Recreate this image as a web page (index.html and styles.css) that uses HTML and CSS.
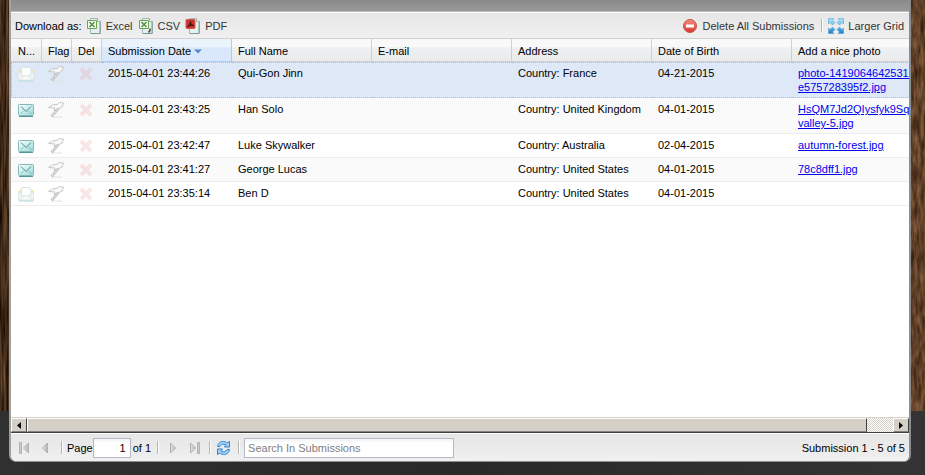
FILE: index.html
```html
<!DOCTYPE html>
<html lang="en">
<head>
    <meta charset="UTF-8">
    <meta name="viewport" content="width=device-width, initial-scale=1.0">
    <title>Submissions</title>
    <link rel="stylesheet" href="styles.css">
</head>
<body>

<!-- shared icons -->
<svg class="sprite" aria-hidden="true">
    <defs>
        <linearGradient id="mailFill" x1="0" y1="0" x2="1" y2="1">
            <stop offset="0" stop-color="#ffffff"/>
            <stop offset="1" stop-color="#9ad6d3"/>
        </linearGradient>
        <linearGradient id="redFill" x1="0" y1="0" x2="0" y2="1">
            <stop offset="0" stop-color="#f58a80"/>
            <stop offset="1" stop-color="#d8382e"/>
        </linearGradient>
        <linearGradient id="blueFill" x1="0" y1="0" x2="0" y2="16" gradientUnits="userSpaceOnUse">
            <stop offset="0" stop-color="#b4e2f6"/>
            <stop offset=".5" stop-color="#6cc0ea"/>
            <stop offset="1" stop-color="#1478be"/>
        </linearGradient>
        <linearGradient id="navFill" x1="0" y1="0" x2="1" y2="0">
            <stop offset="0" stop-color="#e6e6e6"/>
            <stop offset="1" stop-color="#b4b4b4"/>
        </linearGradient>
        <filter id="wood" x="0" y="0" width="100%" height="100%" color-interpolation-filters="sRGB">
            <feTurbulence type="fractalNoise" baseFrequency="0.45 0.02" numOctaves="3" seed="4"/>
            <feColorMatrix values="0.5 0 0 0 0.01  0.4 0 0 0 -0.03  0.28 0 0 0 -0.04  0 0 0 0 1"/>
        </filter>
        <filter id="woodLight" x="0" y="0" width="100%" height="100%" color-interpolation-filters="sRGB">
            <feTurbulence type="fractalNoise" baseFrequency="0.3 0.06" numOctaves="3" seed="9"/>
            <feColorMatrix values="0.45 0 0 0 0.15  0.36 0 0 0 0.07  0.27 0 0 0 0.02  0 0 0 0 1"/>
        </filter>
    </defs>
    <symbol id="mail" viewBox="0 0 16 16">
        <rect x=".5" y="2.500" width="15" height="11" rx="1" fill="url(#mailFill)" stroke="#7fb9bc"/>
        <path d="M1 14.500h14" stroke="#4f999c"/>
        <path d="M3 4.500l5 5 5-5" fill="none" stroke="#3d8c90"/>
        <path d="M2.500 12l3-3M13.500 12l-3-3" fill="none" stroke="#7cbfbf"/>
    </symbol>
    <symbol id="mailOpen" viewBox="0 0 16 16">
        <path d="M.5 5.500h15v9H.5z" fill="#f1f6f5" stroke="#dde8e8"/>
        <path d="M0 6l2.500-3v4zM16 6l-2.500-3v4z" fill="#f5dfa2"/>
        <path d="M3.500 1.500h8l1.500 1.500v6L8 11l-4.500-2z" fill="#fdfefe" stroke="#d6e4e4"/>
        <path d="M1 14l5.500-4.500L8 10.500l1.500-1L15 14z" fill="#f7fbfb" stroke="#dae6e6"/>
        <path d="M1 15h14" stroke="#b5dada"/>
    </symbol>
    <symbol id="flag" viewBox="0 0 16 16">
        <path d="M4 15h10" stroke="#e2e2e2"/>
        <path d="M.5 5.500L4.500 3 9 2.500l2.500-2 4 .5-1.500 4-4 2-4 1.500 1-2.500z" fill="#fafafa" fill-opacity=".8" stroke="#c6c6c6"/>
        <path d="M10.500 6.500L3.500 14.500" stroke="#b4b4b4" stroke-width="2.500"/>
        <path d="M10.500 6.500L3.500 14.500" stroke="#f6f6f6"/>
    </symbol>
    <symbol id="cross" viewBox="0 0 16 16">
        <path d="M3 3l10 10M13 3L3 13" stroke="#f0a0a0" stroke-width="4" opacity=".26"/>
    </symbol>
    <symbol id="sheet" viewBox="0 0 16 16">
        <path d="M4.500.5h7l3 3v12h-10z" fill="#e8efef" stroke="#a3b8b8"/>
        <path d="M14 3.500v12H5" fill="none" stroke="#7d9797"/>
        <path d="M11.500.5v3h3" fill="#fff" stroke="#9fb5b5"/>
        <path d="M1.500 2.500h9v8h-9z" fill="#f4faf1" stroke="#6aa452"/>
        <path d="M3.500 4l5 5M8.500 4l-5 5" stroke="#4f9139" stroke-width="1.500"/>
    </symbol>
</svg>

<div class="page">
    <svg class="plank" aria-hidden="true"><rect width="100%" height="100%" filter="url(#wood)"/></svg>

    <main class="panel">
        <div class="panel-top"></div>

        <div class="toolbar">
            <span>Download as:</span>
            <button class="tool"><svg class="icon"><use href="#sheet"/></svg>Excel</button>
            <button class="tool">
                <svg class="icon" viewBox="0 0 16 16">
                    <use href="#sheet"/>
                    <path d="M12 10.500v2l-1.500 2" fill="none" stroke="#444" stroke-width="1.500"/>
                </svg>CSV
            </button>
            <button class="tool">
                <svg class="icon" viewBox="0 0 16 16">
                    <path d="M4.500.5h7l3 3v12h-10z" fill="#e8efef" stroke="#a3b8b8"/>
                    <path d="M14 3.500v12H5" fill="none" stroke="#7d9797"/>
                    <path d="M11.500.5v3h3" fill="#fff" stroke="#9fb5b5"/>
                    <rect x="1" y="1.500" width="9" height="9" rx="1" fill="#c9332b" stroke="#d0564e"/>
                    <path d="M2.500 8.500c2-1 3-2.500 3-5 0 2.500 1 3.500 3.500 4-2.500-.5-4.500 0-6.500 1z" fill="#5a1512" stroke="#3d1210"/>
                </svg>PDF
            </button>
            <button class="tool push">
                <svg class="icon" viewBox="0 0 16 16">
                    <circle cx="8" cy="8" r="6.500" fill="url(#redFill)" stroke="#c9534b"/>
                    <rect x="4" y="6.500" width="8" height="3" fill="#fff"/>
                </svg>Delete All Submissions
            </button>
            <span class="divider"></span>
            <button class="tool">
                <svg class="icon" viewBox="0 0 16 16">
                    <g fill="url(#blueFill)" stroke="#3f9bd0" stroke-width=".5">
                        <path d="M.5.5h5.500L4.500 2 7 4.500 4.500 7 2 4.500.5 6z"/>
                        <path d="M15.500.5V6L14 4.500 11.500 7 9 4.500 11.500 2 10 .5z"/>
                        <path d="M.5 15.500V10L2 11.500 4.500 9 7 11.500 4.500 14l1.500 1.500z"/>
                        <path d="M15.500 15.500H10l1.500-1.500L9 11.500 11.500 9l2.500 2.500 1.500-1.500z"/>
                    </g>
                </svg>Larger Grid
            </button>
        </div>

        <div class="grid">
            <table>
                <colgroup>
                    <col class="col-first"><col class="col-icon"><col class="col-icon">
                    <col class="col-date">
                    <col class="col-text"><col class="col-text"><col class="col-text"><col class="col-text"><col class="col-text">
                </colgroup>
                <thead>
                    <tr>
                        <th>N...</th>
                        <th>Flag</th>
                        <th>Del</th>
                        <th class="sorted">Submission Date <svg class="sort" viewBox="0 0 8 5"><path d="M0 .5h8L4 4.500z" fill="#5b88c8"/></svg></th>
                        <th>Full Name</th>
                        <th>E-mail</th>
                        <th>Address</th>
                        <th>Date of Birth</th>
                        <th>Add a nice photo</th>
                    </tr>
                </thead>
                <tbody>
                    <tr class="selected">
                        <td><svg class="icon"><use href="#mailOpen"/></svg></td>
                        <td><svg class="icon"><use href="#flag"/></svg></td>
                        <td><svg class="icon"><use href="#cross"/></svg></td>
                        <td>2015-04-01 23:44:26</td>
                        <td>Qui-Gon Jinn</td>
                        <td></td>
                        <td>Country: France</td>
                        <td>04-21-2015</td>
                        <td><a href="#">photo-1419064642531-e575728395f2.jpg</a></td>
                    </tr>
                    <tr>
                        <td><svg class="icon"><use href="#mail"/></svg></td>
                        <td><svg class="icon"><use href="#flag"/></svg></td>
                        <td><svg class="icon"><use href="#cross"/></svg></td>
                        <td>2015-04-01 23:43:25</td>
                        <td>Han Solo</td>
                        <td></td>
                        <td>Country: United Kingdom</td>
                        <td>04-01-2015</td>
                        <td><a href="#">HsQM7Jd2QIysfyk9Sqv-valley-5.jpg</a></td>
                    </tr>
                    <tr>
                        <td><svg class="icon"><use href="#mail"/></svg></td>
                        <td><svg class="icon"><use href="#flag"/></svg></td>
                        <td><svg class="icon"><use href="#cross"/></svg></td>
                        <td>2015-04-01 23:42:47</td>
                        <td>Luke Skywalker</td>
                        <td></td>
                        <td>Country: Australia</td>
                        <td>02-04-2015</td>
                        <td><a href="#">autumn-forest.jpg</a></td>
                    </tr>
                    <tr>
                        <td><svg class="icon"><use href="#mail"/></svg></td>
                        <td><svg class="icon"><use href="#flag"/></svg></td>
                        <td><svg class="icon"><use href="#cross"/></svg></td>
                        <td>2015-04-01 23:41:27</td>
                        <td>George Lucas</td>
                        <td></td>
                        <td>Country: United States</td>
                        <td>04-01-2015</td>
                        <td><a href="#">78c8dff1.jpg</a></td>
                    </tr>
                    <tr>
                        <td><svg class="icon"><use href="#mailOpen"/></svg></td>
                        <td><svg class="icon"><use href="#flag"/></svg></td>
                        <td><svg class="icon"><use href="#cross"/></svg></td>
                        <td>2015-04-01 23:35:14</td>
                        <td>Ben D</td>
                        <td></td>
                        <td>Country: United States</td>
                        <td>04-01-2015</td>
                        <td></td>
                    </tr>
                </tbody>
            </table>
        </div>

        <div class="scrollbar">
            <button class="scroll-btn" aria-label="Scroll left"><svg viewBox="0 0 4 7"><path d="M4 0v7L0 3.500z"/></svg></button>
            <div class="track"><div class="thumb"></div></div>
            <button class="scroll-btn" aria-label="Scroll right"><svg viewBox="0 0 4 7"><path d="M0 0v7l4-3.500z"/></svg></button>
        </div>

        <div class="pager">
            <button class="nav" aria-label="First page">
                <svg class="icon" viewBox="0 0 16 16"><g fill="url(#navFill)" stroke="#b0b0b0"><path d="M4.500 2.500h2v11h-2z"/><path d="M13.500 3v10L8.500 8z"/></g></svg>
            </button>
            <button class="nav" aria-label="Previous page">
                <svg class="icon" viewBox="0 0 16 16"><path d="M9.500 3v10L4.500 8z" fill="url(#navFill)" stroke="#b0b0b0"/></svg>
            </button>
            <span class="divider"></span>
            <label for="page">Page</label>
            <input class="page-input" type="text" id="page" value="1">
            <span class="total">of 1</span>
            <span class="divider"></span>
            <button class="nav" aria-label="Next page">
                <svg class="icon" viewBox="0 0 16 16"><path d="M7.500 3v10l5-5z" fill="url(#navFill)" stroke="#b0b0b0"/></svg>
            </button>
            <button class="nav" aria-label="Last page">
                <svg class="icon" viewBox="0 0 16 16"><g fill="url(#navFill)" stroke="#b0b0b0"><path d="M4.500 3v10l5-5z"/><path d="M11.500 2.500h2v11h-2z"/></g></svg>
            </button>
            <span class="divider"></span>
            <button class="nav" aria-label="Refresh">
                <svg class="icon" viewBox="0 0 16 16">
                    <g fill="#9ed2f8" stroke="#2f83d2">
                        <path d="M2.500 6.500C3 3 6 1 8.500 1.500c1.500 0 2.500.5 3.500 1.500l2.500-1.500V7H9.500l1.500-2C8.500 3.500 6 4 5 6.500z"/>
                        <path d="M14.500 9.500c-.5 3.500-3.500 5.500-6 5-1.500 0-2.500-.5-3.500-1.500l-2.500 1.500V9h5L6 11c2.500 1.500 5 1 6-1.500z"/>
                    </g>
                </svg>
            </button>
            <span class="divider"></span>
            <input class="search-input" type="text" placeholder="Search In Submissions" aria-label="Search In Submissions">
            <span class="push">Submission 1 - 5 of 5</span>
        </div>
    </main>

    <svg class="plank plank-right" aria-hidden="true"><rect width="100%" height="100%" filter="url(#woodLight)"/></svg>
</div>

</body>
</html>
```

FILE: styles.css
```css
* {
    box-sizing: border-box;
}

body {
    margin: 0;
    background: linear-gradient(90deg, #303030, #292929 50%, #343434);
    font-family: "Liberation Sans", Arial, sans-serif;
    font-size: 11px;
    line-height: 14px;
    color: #000;
}

button, input {
    font: inherit;
    color: inherit;
}

button {
    padding: 0;
    border: none;
    background: none;
    cursor: pointer;
}

.sprite {
    position: absolute;
    width: 0;
    height: 0;
}

.page {
    display: flex;
    height: 100vh;
    padding-bottom: 13px;
}

.plank {
    flex: none;
    width: 9px;
    height: calc(100vh - 64px);
    background: #3f2a1a;
}

.plank-right {
    width: 14px;
}

.panel {
    flex: 1;
    min-width: 0;
    display: flex;
    flex-direction: column;
    overflow: hidden;
    background: #fff;
    border: 2px solid #8a8e90;
    border-top: none;
    border-left-color: #a0a0a0;
    border-bottom: 1px solid #8e8e8e;
    border-radius: 0 0 7px 7px;
}

.panel-top {
    height: 12px;
    background: linear-gradient(#8a8a8a, #999);
    border-bottom: 1px solid #bbb;
}

.toolbar, .pager {
    display: flex;
    align-items: center;
    height: 27px;
    padding: 0 4px;
    background: linear-gradient(#e6e6e6, #f0f0f0);
    border-top: 1px solid #fff;
}

.toolbar {
    gap: 4px;
    border-bottom: 1px solid #d0d0d0;
}

.tool {
    display: flex;
    align-items: center;
    gap: 4px;
    padding-right: 1px;
    color: #333;
}

.push {
    margin-left: auto;
}

.icon {
    display: block;
    width: 16px;
    height: 16px;
}

.divider {
    width: 2px;
    height: 13px;
    background: #b4b4ac;
    border-right: 1px solid #fff;
}

.toolbar .divider {
    margin: 0 1px 0 2px;
}

.pager .divider {
    margin-right: 4px;
}

.grid {
    flex: 1;
    overflow: hidden;
}

table {
    width: 921px;
    table-layout: fixed;
    border-collapse: separate;
    border-spacing: 0;
}

.col-first {
    width: 31px;
}

.col-icon {
    width: 30px;
}

.col-date {
    width: 130px;
}

.col-text {
    width: 140px;
}

th {
    height: 23px;
    padding: 1px 0 0 6px;
    text-align: left;
    font-weight: normal;
    white-space: nowrap;
    background: linear-gradient(#f9f9f9 35%, #eff0f1 40%, #e9eaec);
    border-right: 1px solid #d0d0d0;
    border-bottom: 1px solid #d0d0d0;
}

th:first-child, td:first-child {
    padding-left: 7px;
}

.sorted {
    background: linear-gradient(#ebf3fd 35%, #d9e8fb 40%, #d9e8fb);
    border-right-color: #aaccf6;
    border-bottom-color: #aaccf6;
}

.sort {
    width: 8px;
    height: 5px;
    vertical-align: middle;
}

td {
    padding: 3px 6px;
    vertical-align: top;
    border-top: 1px solid #fff;
    border-bottom: 1px solid #ededed;
}

tbody tr:nth-child(even) td {
    background: #fafafa;
    border-top-color: #fafafa;
}

tbody .selected td {
    background: #dfe8f6;
    border-top: 1px dotted #a3bae9;
    border-bottom: 1px dotted #a3bae9;
}

.selected td:first-child {
    padding-left: 6px;
    border-left: 1px dotted #a3bae9;
}

a {
    color: #00e;
}

.scrollbar {
    display: flex;
    height: 16px;
    background: #fff;
    border-top: 1px solid #d4d0c8;
    border-bottom: 1px solid #404040;
}

.scroll-btn {
    display: flex;
    align-items: center;
    justify-content: center;
    flex: none;
    width: 16px;
    background: #d4d0c8;
    border: 1px solid;
    border-color: #fff #404040 #808080 #fff;
}

.scroll-btn svg {
    width: 4px;
    height: 7px;
}

.track {
    flex: 1;
    background: repeating-conic-gradient(#d4d0c8 0 25%, #fff 0 50%) 0 0 / 2px 2px;
}

.thumb {
    width: 97%;
    height: 100%;
    background: #d4d0c8;
    border: 1px solid;
    border-color: #fff #404040 #808080 #fff;
}

.pager {
    flex: none;
    height: 28px;
}

.nav {
    width: 16px;
    margin-right: 7px;
}

.total {
    margin-right: 6px;
}

.page-input, .search-input {
    height: 20px;
    border: 1px solid #b5b8c8;
    background: linear-gradient(#f0f2f4, #fff 4px);
}

.page-input {
    width: 38px;
    margin-right: 2px;
    padding: 2px 4px;
    text-align: right;
}

.search-input {
    width: 210px;
    padding: 2px 3px;
}

.search-input::placeholder {
    color: #808080;
}
```
